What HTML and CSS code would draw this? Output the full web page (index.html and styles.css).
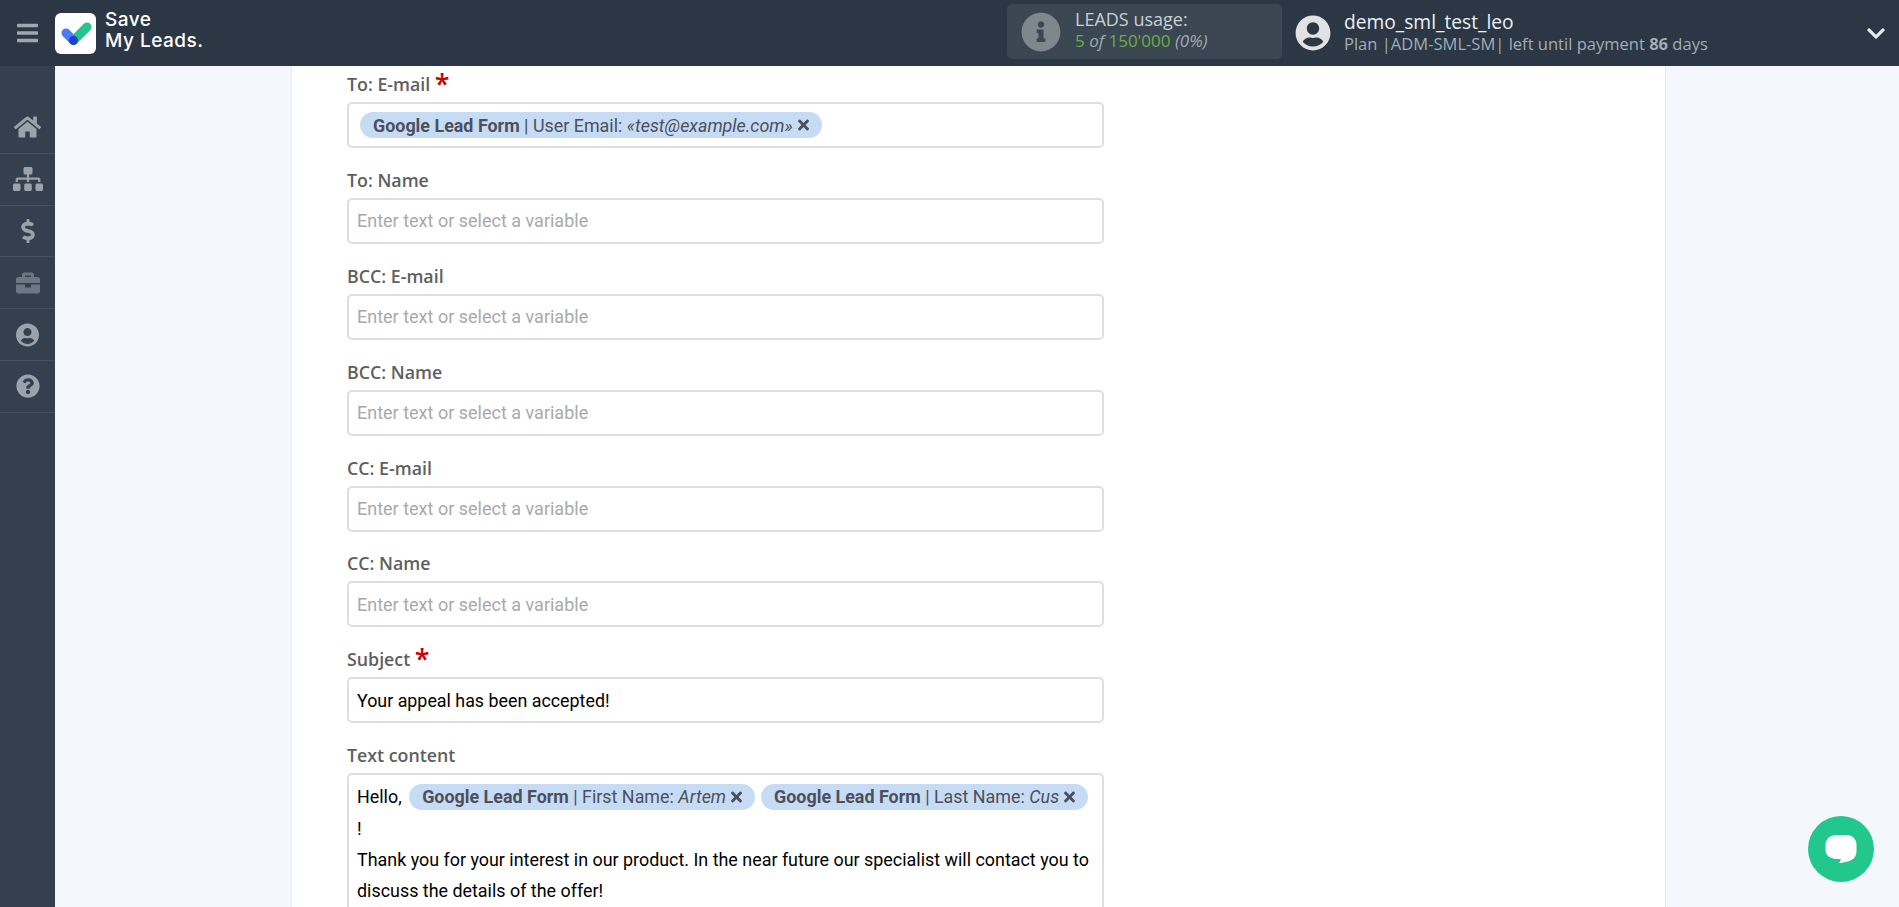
FILE: index.html
```html
<!DOCTYPE html>
<html lang="en">
<head>
<meta charset="utf-8">
<title>Save My Leads</title>
<link rel="stylesheet" href="styles.css">
</head>
<body>
<header class="topbar">
  <svg class="burger" viewBox="0 0 448 512"><path d="M16 132h416c8.837 0 16-7.163 16-16V76c0-8.837-7.163-16-16-16H16C7.163 60 0 67.163 0 76v40c0 8.837 7.163 16 16 16zm0 160h416c8.837 0 16-7.163 16-16v-40c0-8.837-7.163-16-16-16H16c-8.837 0-16 7.163-16 16v40c0 8.837 7.163 16 16 16zm0 160h416c8.837 0 16-7.163 16-16v-40c0-8.837-7.163-16-16-16H16c-8.837 0-16 7.163-16 16v40c0 8.837 7.163 16 16 16z"/></svg>
  <div class="logo-box">
    <svg class="logo-mark" viewBox="0 0 41 41">
      <path class="logo-green" d="M19 27 L32 14" />
      <path class="logo-blue" d="M11 20 L18 27" />
      <circle class="logo-dot" cx="18.500" cy="27.500" r="4.500"/>
    </svg>
  </div>
  <div class="logo-text"><span>Save</span><span>My Leads.</span></div>
  <div class="usage">
    <svg class="usage-icon" viewBox="0 0 512 512"><path d="M256 8C119.043 8 8 119.083 8 256c0 136.997 111.043 248 248 248s248-111.003 248-248C504 119.083 392.957 8 256 8zm0 110c23.196 0 42 18.804 42 42s-18.804 42-42 42-42-18.804-42-42 18.804-42 42-42zm56 254c0 6.627-5.373 12-12 12h-88c-6.627 0-12-5.373-12-12v-24c0-6.627 5.373-12 12-12h12v-64h-12c-6.627 0-12-5.373-12-12v-24c0-6.627 5.373-12 12-12h64c6.627 0 12 5.373 12 12v100h12c6.627 0 12 5.373 12 12v24z"/></svg>
    <div class="usage-text">
      <div class="usage-title">LEADS usage:</div>
      <div class="usage-count"><span class="green">5</span> <em>of</em> <span class="green">150'000</span> <em>(0%)</em></div>
    </div>
  </div>
  <div class="user">
    <svg class="avatar" viewBox="0 0 496 512"><path d="M248 8C111 8 0 119 0 256s111 248 248 248 248-111 248-248S385 8 248 8zm0 96c48.6 0 88 39.4 88 88s-39.4 88-88 88-88-39.4-88-88 39.4-88 88-88zm0 344c-58.7 0-111.3-26.6-146.5-68.2 18.8-35.4 55.6-59.8 98.5-59.8 2.4 0 4.8.4 7.1 1.1 13 4.2 26.6 6.9 40.9 6.9 14.3 0 28-2.7 40.9-6.9 2.3-.7 4.7-1.1 7.1-1.1 42.9 0 79.7 24.4 98.5 59.8C359.3 421.4 306.7 448 248 448z"/></svg>
    <div class="user-text">
      <div class="user-name">demo_sml_test_leo</div>
      <div class="user-plan">Plan |ADM-SML-SM| left until payment <b>86</b> days</div>
    </div>
  </div>
  <svg class="chevron" viewBox="0 0 448 512"><path d="M207.029 381.476L12.686 187.132c-9.373-9.373-9.373-24.569 0-33.941l22.667-22.667c9.357-9.357 24.522-9.375 33.901-.04L224 284.505l154.745-154.021c9.379-9.335 24.544-9.317 33.901.04l22.667 22.667c9.373 9.373 9.373 24.569 0 33.941L240.971 381.476c-9.373 9.372-24.569 9.372-33.942 0z"/></svg>
</header>
<div class="body-row">
  <nav class="sidebar">
    <a class="nav-item"><svg class="nav-home" viewBox="0 0 576 512"><path d="M280.37 148.26L96 300.11V464a16 16 0 0 0 16 16l112.06-.29a16 16 0 0 0 15.92-16V368a16 16 0 0 1 16-16h64a16 16 0 0 1 16 16v95.64a16 16 0 0 0 16 16.05L464 480a16 16 0 0 0 16-16V300L295.67 148.26a12.19 12.19 0 0 0-15.3 0zM571.6 251.47L488 182.56V44.05a12 12 0 0 0-12-12h-56a12 12 0 0 0-12 12v72.61L318.47 43a48 48 0 0 0-61 0L4.34 251.47a12 12 0 0 0-1.6 16.9l25.5 31A12 12 0 0 0 45.15 301l235.22-193.74a12.19 12.19 0 0 1 15.3 0L530.9 301a12 12 0 0 0 16.9-1.6l25.5-31a12 12 0 0 0-1.7-16.93z"/></svg></a>
    <a class="nav-item"><svg class="nav-map" viewBox="0 0 640 512"><path d="M128 352H32c-17.67 0-32 14.33-32 32v96c0 17.67 14.33 32 32 32h96c17.67 0 32-14.33 32-32v-96c0-17.67-14.33-32-32-32zm-24-80h192v48h48v-48h192v48h48v-57.59c0-21.17-17.23-38.41-38.41-38.41H344v-64h40c17.67 0 32-14.33 32-32V32c0-17.67-14.33-32-32-32H256c-17.67 0-32 14.33-32 32v96c0 17.67 14.33 32 32 32h40v64H94.41C73.23 224 56 241.23 56 262.41V320h48v-48zm264 80h-96c-17.67 0-32 14.33-32 32v96c0 17.67 14.33 32 32 32h96c17.67 0 32-14.33 32-32v-96c0-17.67-14.33-32-32-32zm240 0h-96c-17.67 0-32 14.33-32 32v96c0 17.67 14.33 32 32 32h96c17.67 0 32-14.33 32-32v-96c0-17.67-14.33-32-32-32z"/></svg></a>
    <a class="nav-item"><svg class="nav-dollar" viewBox="0 0 288 512"><path d="M209.2 233.4l-108-31.6C88.7 198.2 80 186.5 80 173.5c0-16.3 13.2-29.5 29.5-29.5h66.3c12.2 0 24.2 3.7 34.2 10.5 6.1 4.1 14.3 3.1 19.5-2l34.8-34c7.1-6.9 6.1-18.4-1.8-24.5C238 74.8 207.4 64.1 176 64V16c0-8.8-7.2-16-16-16h-32c-8.8 0-16 7.2-16 16v48h-2.5C45.8 64-5.4 118.7.5 183.6c4.2 46.1 39.4 83.6 83.8 96.6l102.5 30c12.5 3.7 21.2 15.3 21.2 28.3 0 16.3-13.2 29.5-29.5 29.5h-66.3C100 368 88 364.3 78 357.5c-6.1-4.1-14.3-3.1-19.5 2l-34.8 34c-7.1 6.9-6.1 18.4 1.8 24.5 24.5 19.2 55.1 29.9 86.5 30v48c0 8.8 7.2 16 16 16h32c8.8 0 16-7.2 16-16v-48.2c46.6-.9 90.3-28.6 105.7-72.7 21.5-61.6-14.6-124.8-72.5-141.7z"/></svg></a>
    <a class="nav-item"><svg class="nav-case" viewBox="0 0 512 512"><path d="M320 336c0 8.84-7.16 16-16 16h-96c-8.84 0-16-7.16-16-16v-48H0v144c0 25.6 22.4 48 48 48h416c25.6 0 48-22.4 48-48V288H320v48zm144-208h-80V80c0-25.6-22.4-48-48-48H176c-25.6 0-48 22.4-48 48v48H48c-25.6 0-48 22.4-48 48v80h512v-80c0-25.6-22.4-48-48-48zm-144 0H192V96h128v32z"/></svg></a>
    <a class="nav-item"><svg class="nav-user" viewBox="0 0 496 512"><path d="M248 8C111 8 0 119 0 256s111 248 248 248 248-111 248-248S385 8 248 8zm0 96c48.6 0 88 39.4 88 88s-39.4 88-88 88-88-39.4-88-88 39.4-88 88-88zm0 344c-58.7 0-111.3-26.6-146.5-68.2 18.8-35.4 55.6-59.8 98.5-59.8 2.4 0 4.8.4 7.1 1.1 13 4.2 26.6 6.9 40.9 6.9 14.3 0 28-2.7 40.9-6.9 2.3-.7 4.7-1.1 7.1-1.1 42.9 0 79.7 24.4 98.5 59.8C359.3 421.4 306.7 448 248 448z"/></svg></a>
    <a class="nav-item"><svg class="nav-help" viewBox="0 0 512 512"><path d="M504 256c0 136.997-111.043 248-248 248S8 392.997 8 256C8 119.083 119.043 8 256 8s248 111.083 248 248zM262.655 90c-54.497 0-89.255 22.957-116.549 63.758-3.536 5.286-2.353 12.415 2.715 16.258l34.699 26.31c5.205 3.947 12.621 3.008 16.665-2.122 17.864-22.658 30.113-35.797 57.303-35.797 20.429 0 45.698 13.148 45.698 32.958 0 14.976-12.363 22.667-32.534 33.976C247.128 238.528 216 254.941 216 296v4c0 6.627 5.373 12 12 12h56c6.627 0 12-5.373 12-12v-1.333c0-28.462 83.186-29.647 83.186-106.667 0-58.002-60.165-102-116.531-102zM256 338c-25.365 0-46 20.635-46 46 0 25.364 20.635 46 46 46s46-20.636 46-46c0-25.365-20.635-46-46-46z"/></svg></a>
  </nav>
  <main class="main">
    <section class="panel">
      <div class="field">
        <label class="label">To: E-mail <span class="req">*</span></label>
        <div class="input"><span class="chip"><b>Google Lead Form</b> | User Email: <i>«test@example.com»</i><svg class="chip-x" viewBox="0 0 352 512"><path d="M242.72 256l100.07-100.07c12.28-12.28 12.28-32.19 0-44.48l-22.24-22.24c-12.28-12.28-32.19-12.28-44.48 0L176 189.28 75.93 89.21c-12.28-12.28-32.19-12.28-44.48 0L9.21 111.45c-12.28 12.28-12.28 32.19 0 44.48L109.28 256 9.21 356.07c-12.28 12.28-12.28 32.19 0 44.48l22.24 22.24c12.28 12.28 32.2 12.28 44.48 0L176 322.72l100.07 100.07c12.28 12.28 32.2 12.28 44.48 0l22.24-22.24c12.28-12.28 12.28-32.19 0-44.48L242.72 256z"/></svg></span></div>
      </div>
      <div class="field"><label class="label">To: Name</label><div class="input placeholder">Enter text or select a variable</div></div>
      <div class="field"><label class="label">BCC: E-mail</label><div class="input placeholder">Enter text or select a variable</div></div>
      <div class="field"><label class="label">BCC: Name</label><div class="input placeholder">Enter text or select a variable</div></div>
      <div class="field"><label class="label">CC: E-mail</label><div class="input placeholder">Enter text or select a variable</div></div>
      <div class="field"><label class="label">CC: Name</label><div class="input placeholder">Enter text or select a variable</div></div>
      <div class="field"><label class="label">Subject <span class="req">*</span></label><div class="input value">Your appeal has been accepted!</div></div>
      <div class="field">
        <label class="label">Text content</label>
        <div class="textarea">
          <div class="line">Hello, <span class="chip chip-inline"><b>Google Lead Form</b> | First Name: <i>Artem</i><svg class="chip-x" viewBox="0 0 352 512"><path d="M242.72 256l100.07-100.07c12.28-12.28 12.28-32.19 0-44.48l-22.24-22.24c-12.28-12.28-32.19-12.28-44.48 0L176 189.28 75.93 89.21c-12.28-12.28-32.19-12.28-44.48 0L9.21 111.45c-12.28 12.28-12.28 32.19 0 44.48L109.28 256 9.21 356.07c-12.28 12.28-12.28 32.19 0 44.48l22.24 22.24c12.28 12.28 32.2 12.28 44.48 0L176 322.72l100.07 100.07c12.28 12.28 32.2 12.28 44.48 0l22.24-22.24c12.28-12.28 12.28-32.19 0-44.48L242.72 256z"/></svg></span><span class="chip chip-inline"><b>Google Lead Form</b> | Last Name: <i>Cus</i><svg class="chip-x" viewBox="0 0 352 512"><path d="M242.72 256l100.07-100.07c12.28-12.28 12.28-32.19 0-44.48l-22.24-22.24c-12.28-12.28-32.19-12.28-44.48 0L176 189.28 75.93 89.21c-12.28-12.28-32.19-12.28-44.48 0L9.21 111.45c-12.28 12.28-12.28 32.19 0 44.48L109.28 256 9.21 356.07c-12.28 12.28-12.28 32.19 0 44.48l22.24 22.24c12.28 12.28 32.2 12.28 44.48 0L176 322.72l100.07 100.07c12.28 12.28 32.2 12.28 44.48 0l22.24-22.24c12.28-12.28 12.28-32.19 0-44.48L242.72 256z"/></svg></span></div>
          <div class="line">!</div>
          <div class="line">Thank you for your interest in our product. In the near future our specialist will contact you to discuss the details of the offer!</div>
        </div>
      </div>
    </section>
  </main>
</div>
<button class="chat" type="button" aria-label="Chat">
  <svg viewBox="0 0 32 32"><path d="M11 0h10c6 0 10 4 10 10v6c0 6-4 9.500-9 10.500-3 .8-6 1.500-8.500 1.500 .8-1 1.500-2.200 1.700-4H11C5 24 0 20.500 0 15v-5C0 4 5 0 11 0z" transform="translate(.5 2)"/></svg>
</button>
</body>
</html>
```
FILE: styles.css
```css
* { box-sizing: border-box; }
html, body { margin: 0; height: 100%; overflow: hidden; }
body { font-family: Roboto, "Liberation Sans", sans-serif; font-size: 18px; background: #f4f7fd; display: flex; flex-direction: column; }
.topbar { height: 66px; flex: none; background: #2b3745; display: flex; align-items: center; color: #fff; }
.burger { width: 21px; height: 24px; margin-left: 17px; fill: #a2a7ae; flex: none; }
.logo-box { width: 41px; height: 41px; margin-left: 17px; background: #fff; border-radius: 6px; flex: none; }
.logo-mark { display: block; width: 41px; height: 41px; }
.logo-green { stroke: #22c68d; stroke-width: 9; stroke-linecap: round; fill: none; }
.logo-blue { stroke: #4b7cf3; stroke-width: 9; stroke-linecap: round; fill: none; }
.logo-dot { fill: #1c3fd6; }
.logo-text { margin-left: 9px; width: 110px; display: flex; flex-direction: column; font-family: Inter, sans-serif; font-weight: 500; font-size: 19px; line-height: 21px; letter-spacing: .5px; color: #fff; padding-bottom: 6px; }
.usage { margin-left: 792px; width: 275px; height: 55px; background: #3a4752; border-radius: 5px; display: flex; align-items: center; padding-left: 14px; flex: none; margin-top: -3px; }
.usage-icon { width: 40px; height: 40px; fill: #7f868c; flex: none; }
.usage-text { margin-left: 14px; margin-top: -3px; font-family: "Open Sans", sans-serif; font-size: 18px; line-height: 22px; color: #c3c8cd; }
.usage-title { color: #c9d0d5; }
.usage-count { font-size: 17px; color: #a3aab0; }
.green { color: #6cad45; }
.user { margin-left: 13px; display: flex; align-items: center; flex: none; width: 576px; }
.avatar { width: 36px; height: 36px; fill: #e2e2e2; flex: none; }
.user-text { margin-left: 13px; font-family: "Open Sans", sans-serif; }
.user-name { font-size: 19.2px; line-height: 23px; margin-top: -2px; color: #eef0f2; }
.user-plan { font-size: 16.55px; line-height: 21px; color: #a3acb4; white-space: nowrap; }
.chevron { width: 18px; height: 21px; fill: #e8eaec; flex: none; margin-left: -4px; }
.body-row { flex: 1; min-height: 0; display: flex; }
.sidebar { width: 55px; flex: none; background: #343f4f; padding-top: 36px; }
.nav-item { height: 51.8px; border-bottom: 1px solid #475260; display: flex; align-items: center; justify-content: center; fill: #9ca2aa; }
.nav-home { width: 27px; height: 24px; }
.nav-map { width: 30px; height: 24px; }
.nav-dollar { width: 14px; height: 24px; }
.nav-case { width: 24px; height: 24px; fill: #6e7681; }
.nav-user { width: 23px; height: 24px; }
.nav-help { width: 24px; height: 24px; }
.main { flex: 1; min-width: 0; padding-left: 236px; padding-right: 233px; overflow: hidden; }
.panel { background: #fff; border-left: 1px solid #e7eaf0; border-right: 1px solid #e7eaf0; height: 100%; padding: 6px 0 0 55px; }
.field { width: 757px; margin-bottom: 19.9px; }
.label { display: block; height: 24px; margin-bottom: 6px; font-family: "Open Sans", sans-serif; font-weight: 600; font-size: 17.8px; line-height: 24px; color: #5f5f5f; }
.req { display: inline-block; height: 24px; color: #cc0000; font-size: 27px; line-height: 24px; vertical-align: top; }
.input { height: 46px; border: 2px solid #dedede; border-radius: 5px; padding: 0 8px; display: flex; align-items: center; font-size: 18px; color: #000; background: #fff; }
.value { font-size: 17.85px; }
.placeholder { color: #a9a9a9; }
.chip { display: inline-flex; align-items: center; height: 26px; margin-left: 3px; padding: 0 13px; border-radius: 13px; background: #c6dcf5; color: #4d4f5c; font-size: 17.9px; white-space: pre; }
.chip b { font-weight: 700; }
.chip-x { width: 11px; height: 16px; fill: #4d4f5c; margin-left: 5px; }
.textarea { height: 300px; border: 2px solid #dedede; border-radius: 5px; padding: 6px 8px; font-size: 17.9px; line-height: 31.3px; color: #000; }
.line { min-height: 31px; }
.chip-inline { margin-right: 3px; vertical-align: baseline; line-height: 26px; }
.chat { position: fixed; left: 1808px; top: 816px; width: 66px; height: 66px; border: 0; border-radius: 50%; background: #22c78e; padding: 17px; display: block; }
.chat svg { display: block; width: 32px; height: 32px; fill: #fff; }
```
